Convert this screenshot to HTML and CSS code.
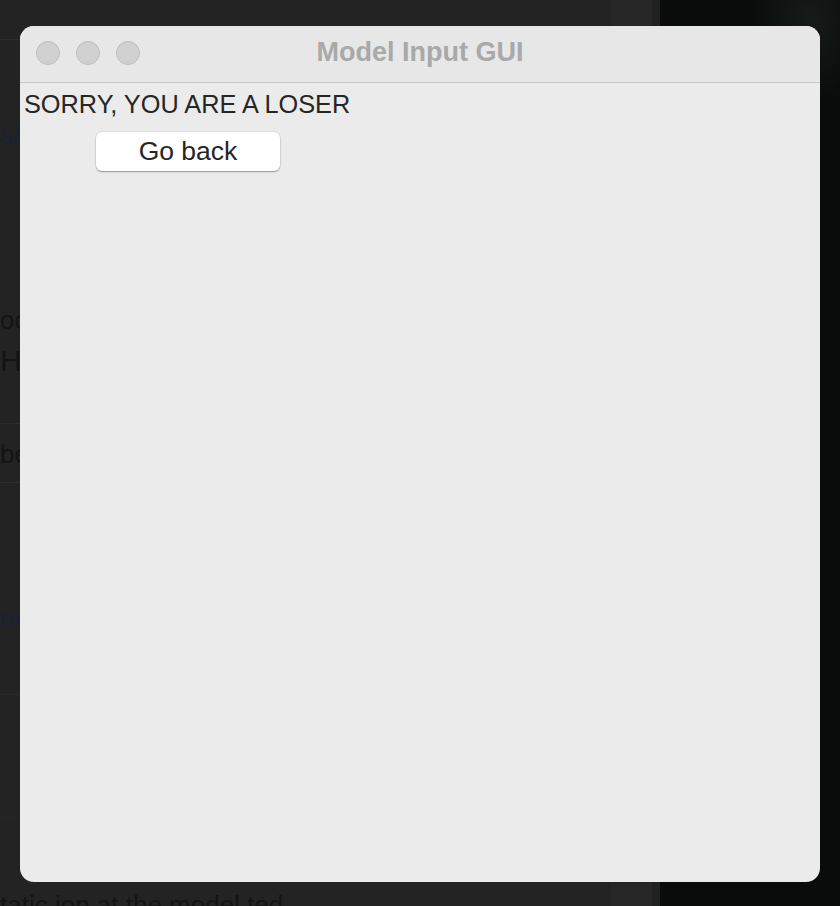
FILE: index.html
```html
<!DOCTYPE html>
<html>
<head>
<meta charset="utf-8">
<link rel="stylesheet" href="styles.css">
<title>Model Input GUI</title>
</head>
<body>
<div class="desktop">
  <div class="bgapp">
    <div class="bg-top"></div>
    <div class="bg-row r1"><span class="bg-link">s/</span></div>
    <div class="bg-row r2">
      <span class="bg-text">oc</span>
      <span class="bg-big">H</span>
    </div>
    <div class="bg-row r3"><span class="bg-text">be</span></div>
    <div class="bg-row r4"><span class="bg-link">oc</span></div>
    <div class="bg-row r5"></div>
    <div class="bg-row r6"><span class="bg-text">tatic ion at the model ted</span></div>
  </div>
  <div class="photo"></div>

  <div class="window">
    <div class="titlebar">
      <div class="lights">
        <span class="light"></span>
        <span class="light"></span>
        <span class="light"></span>
      </div>
      <div class="title">Model Input GUI</div>
    </div>
    <div class="content">
      <div class="message">SORRY, YOU ARE A LOSER</div>
      <button class="btn">Go back</button>
    </div>
  </div>
</div>
</body>
</html>
```

FILE: styles.css
```css
* { box-sizing: border-box; }
html, body { margin: 0; padding: 0; }
body {
  width: 840px;
  height: 906px;
  overflow: hidden;
  background: #232323;
  font-family: "Liberation Sans", Arial, sans-serif;
}
.desktop {
  position: relative;
  width: 840px;
  height: 906px;
  display: flex;
}
.bgapp {
  width: 660px;
  height: 906px;
  background: linear-gradient(to right, #232323 0, #232323 611px, #262626 611px, #262626 652px, #212121 652px);
  display: flex;
  flex-direction: column;
}
.bg-top {
  height: 40px;
  border-bottom: 1px solid #2e2e2e;
  flex: none;
}
.bg-row {
  flex: none;
  display: flex;
  flex-direction: column;
  align-items: flex-start;
  white-space: nowrap;
  font-size: 26px;
  line-height: 30px;
}
.bg-link { color: #1a2232; }
.bg-text { color: #141414; }
.bg-big { color: #141414; font-size: 30px; line-height: 36px; margin-top: 8px; }
.r1 { height: 190px; padding-top: 80px; }
.r2 { height: 194px; padding-top: 75px; border-bottom: 1px solid #2c2c2c; }
.r3 { height: 59px; padding-top: 15px; border-bottom: 1px solid #2c2c2c; }
.r4 { height: 212px; padding-top: 119px; border-bottom: 1px solid #2a2a2a; }
.r5 { height: 123px; border-bottom: 1px solid #262626; }
.r6 { height: 100px; padding-top: 72px; }
.photo {
  flex: 1;
  height: 906px;
  background:
    radial-gradient(ellipse 40px 120px at 30px 200px, rgba(40,46,38,0.5), transparent),
    radial-gradient(ellipse 50px 140px at 20px 620px, rgba(38,42,34,0.5), transparent),
    radial-gradient(ellipse 60px 80px at 150px 20px, rgba(30,36,34,0.6), transparent),
    #0a0c0c;
}
.window {
  position: absolute;
  left: 20px;
  top: 26px;
  width: 800px;
  height: 856px;
  border-radius: 14px;
  overflow: hidden;
  background: #ebebeb;
  display: flex;
  flex-direction: column;
}
.titlebar {
  position: relative;
  height: 57px;
  flex: none;
  background: #e6e7e6;
  border-bottom: 1px solid #c8c8c8;
  display: flex;
  align-items: center;
  justify-content: center;
}
.lights {
  position: absolute;
  left: 16px;
  top: 15px;
  display: flex;
  gap: 16px;
}
.light {
  width: 24px;
  height: 24px;
  border-radius: 50%;
  background: #d1d1d1;
  border: 1px solid #bdbdbd;
}
.title {
  font-size: 27px;
  font-weight: bold;
  color: #a9a9a9;
  margin-top: -3px;
}
.content {
  flex: 1;
  display: flex;
  flex-direction: column;
  align-items: flex-start;
  padding: 6px 0 0 4px;
}
.message {
  font-size: 25.3px;
  color: #262626;
  line-height: 30px;
}
.btn {
  margin: 13px 0 0 72px;
  width: 184px;
  height: 39px;
  border: none;
  border-radius: 6px;
  background: #ffffff;
  box-shadow: 0 1px 1.5px rgba(0,0,0,0.35), 0 0 0 0.5px rgba(0,0,0,0.08);
  font-family: "Liberation Sans", Arial, sans-serif;
  font-size: 26.5px;
  color: #262626;
  padding: 0;
  line-height: 39px;
}
```
